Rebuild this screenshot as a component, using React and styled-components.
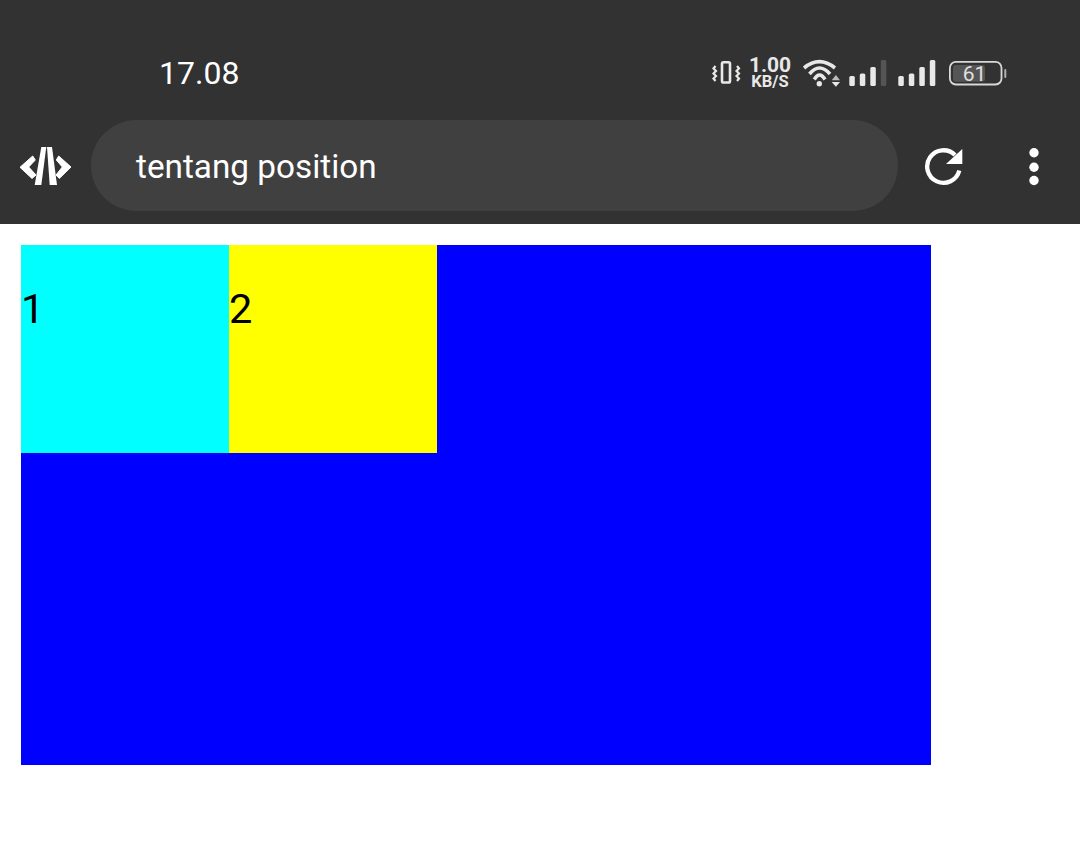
import React from 'react';
import styled, { createGlobalStyle } from 'styled-components';

const GlobalStyle = createGlobalStyle`
  html, body {
    margin: 0;
    padding: 0;
    background: #ffffff;
    font-family: Roboto, "Liberation Sans", sans-serif;
  }
`;

const Page = styled.div`
  width: 1080px;
  height: 851px;
  overflow: hidden;
  background: #ffffff;
`;

const Header = styled.header`
  height: 224px;
  background: #323232;
  display: flex;
  flex-direction: column;
`;

const StatusBar = styled.div`
  height: 120px;
  padding: 26px 73px 0 159px;
  box-sizing: border-box;
  display: flex;
  align-items: center;
  justify-content: space-between;
`;

const Clock = styled.span`
  color: #ffffff;
  font-size: 32px;
  line-height: 40px;
`;

const StatusIcons = styled.div`
  display: flex;
  align-items: center;
`;

const Speed = styled.div`
  width: 46px;
  margin: 0 9px 0 6px;
  color: #e8e8e8;
  font-weight: 700;
  text-align: center;
  display: flex;
  flex-direction: column;
  align-items: center;
`;

const SpeedValue = styled.span`
  font-size: 21px;
  line-height: 16px;
`;

const SpeedUnit = styled.span`
  font-size: 16.5px;
  line-height: 17px;
`;

const Toolbar = styled.div`
  height: 91px;
  display: flex;
  align-items: center;
  padding-left: 19px;
`;

const LogoSlot = styled.div`
  width: 72px;
  display: flex;
`;

const AddressBar = styled.div`
  width: 807px;
  height: 91px;
  border-radius: 46px;
  background: #404040;
  color: #ffffff;
  font-size: 33.3px;
  line-height: 93px;
  padding-left: 45px;
  box-sizing: border-box;
`;

const IconSlot = styled.div`
  display: flex;
  margin-left: ${(p) => p.$gap}px;
`;

const Content = styled.main`
  padding: 21px 0 0 21px;
`;

const Container = styled.div`
  width: 910px;
  height: 520px;
  background: #0000ff;
  display: flex;
  align-items: flex-start;
`;

const Box = styled.div`
  width: 208px;
  height: 208px;
  padding-top: 40px;
  box-sizing: border-box;
  background: ${(p) => p.$color};
  color: #000000;
  font-size: 41.5px;
  line-height: 47px;
`;

const VibrateIcon = () => (
  <svg width="30" height="28" viewBox="0 0 30 28" fill="none" stroke="#e8e8e8">
    <rect x="11" y="3.2" width="8" height="20.3" rx="1.6" strokeWidth="2.6" />
    <path d="M4.5 7 L2.5 9.5 L5 12 L2.5 14.5 L5 17 L2.5 19.5 L4.5 22" strokeWidth="2.2" />
    <path d="M26 7 L28 9.5 L25.5 12 L28 14.5 L25.5 17 L28 19.5 L26 22" strokeWidth="2.2" />
  </svg>
);

const WifiIcon = () => (
  <svg width="40" height="32" viewBox="0 0 40 32" fill="none">
    <path d="M2 11 Q17.3 -1.6 33 11" stroke="#e8e8e8" strokeWidth="3.6" />
    <path d="M7.5 17 Q17.3 5 28 17" stroke="#e8e8e8" strokeWidth="3.6" />
    <path d="M12.3 22.5 Q17.5 13.5 23 22.5" stroke="#e8e8e8" strokeWidth="3.6" />
    <circle cx="17.3" cy="26.7" r="2.7" fill="#e8e8e8" />
    <path d="M29.7 23.3 L38 23.3 L33.9 18 Z" fill="#bdbdbd" />
    <path d="M29.7 25 L38 25 L33.9 29.7 Z" fill="#e8e8e8" />
  </svg>
);

const SignalIcon = ({ lastColor }) => (
  <svg width="38" height="28" viewBox="0 0 38 28">
    <rect x="0.3" y="17" width="5.5" height="10" rx="1.5" fill="#e8e8e8" />
    <rect x="10.8" y="14.5" width="5.5" height="12.5" rx="1.5" fill="#e8e8e8" />
    <rect x="21.3" y="8" width="5.5" height="19" rx="1.5" fill="#e8e8e8" />
    <rect x="31.8" y="1" width="5.5" height="26" rx="1.5" fill={lastColor} />
  </svg>
);

const BatteryIcon = () => (
  <svg width="59" height="28" viewBox="0 0 59 28">
    <rect x="1.9" y="2.9" width="51.6" height="22.6" rx="6" fill="none" stroke="#d8d8d8" strokeWidth="1.8" />
    <rect x="5" y="6" width="32" height="16.7" rx="3" fill="#555555" />
    <rect x="56.3" y="10" width="2" height="9" rx="1" fill="#b0b0b0" />
    <text x="26.5" y="22" fontFamily="Roboto, sans-serif" fontSize="21" fill="#e0e0e0" textAnchor="middle">61</text>
  </svg>
);

const LogoIcon = () => (
  <svg width="54" height="40" viewBox="0 0 54 40" fill="#ffffff">
    <g stroke="#ffffff" strokeWidth="1" strokeLinejoin="round">
      <path d="M1 21.3 L13.7 10 L16.3 14 L9.7 21 L17 29 L13 32.5 Z" />
      <path d="M52 21 L39.7 10 L37.3 14 L43.3 21 L37 29 L40.3 32.5 Z" />
    </g>
    <path d="M22.3 1 L27.3 1 L22.3 39 L15.7 39 Z" />
    <path d="M28 1 L33 1 L38 39 L30.7 39 Z" />
  </svg>
);

const ReloadIcon = () => (
  <svg width="40" height="40" viewBox="0 0 40 40" fill="none">
    <path d="M31 9 A16.3 16.3 0 1 0 35.3 24.5" stroke="#ffffff" strokeWidth="4.3" />
    <path d="M38.3 3 L38.3 18 L22 18 Z" fill="#ffffff" />
  </svg>
);

const MoreIcon = () => (
  <svg width="12" height="40" viewBox="0 0 12 40" fill="#ffffff">
    <circle cx="6" cy="6.8" r="4.7" />
    <circle cx="6" cy="21.2" r="4.7" />
    <circle cx="6" cy="34.5" r="4.7" />
  </svg>
);

export default function App() {
  return (
    <Page>
      <GlobalStyle />
      <Header>
        <StatusBar>
          <Clock>17.08</Clock>
          <StatusIcons>
            <VibrateIcon />
            <Speed>
              <SpeedValue>1.00</SpeedValue>
              <SpeedUnit>KB/S</SpeedUnit>
            </Speed>
            <WifiIcon />
            <IconSlot $gap={7}>
              <SignalIcon lastColor="#555555" />
            </IconSlot>
            <IconSlot $gap={11}>
              <SignalIcon lastColor="#e8e8e8" />
            </IconSlot>
            <IconSlot $gap={12}>
              <BatteryIcon />
            </IconSlot>
          </StatusIcons>
        </StatusBar>
        <Toolbar>
          <LogoSlot>
            <LogoIcon />
          </LogoSlot>
          <AddressBar>tentang position</AddressBar>
          <IconSlot $gap={26}>
            <ReloadIcon />
          </IconSlot>
          <IconSlot $gap={64}>
            <MoreIcon />
          </IconSlot>
        </Toolbar>
      </Header>
      <Content>
        <Container>
          <Box $color="#00ffff">1</Box>
          <Box $color="#ffff00">2</Box>
        </Container>
      </Content>
    </Page>
  );
}
